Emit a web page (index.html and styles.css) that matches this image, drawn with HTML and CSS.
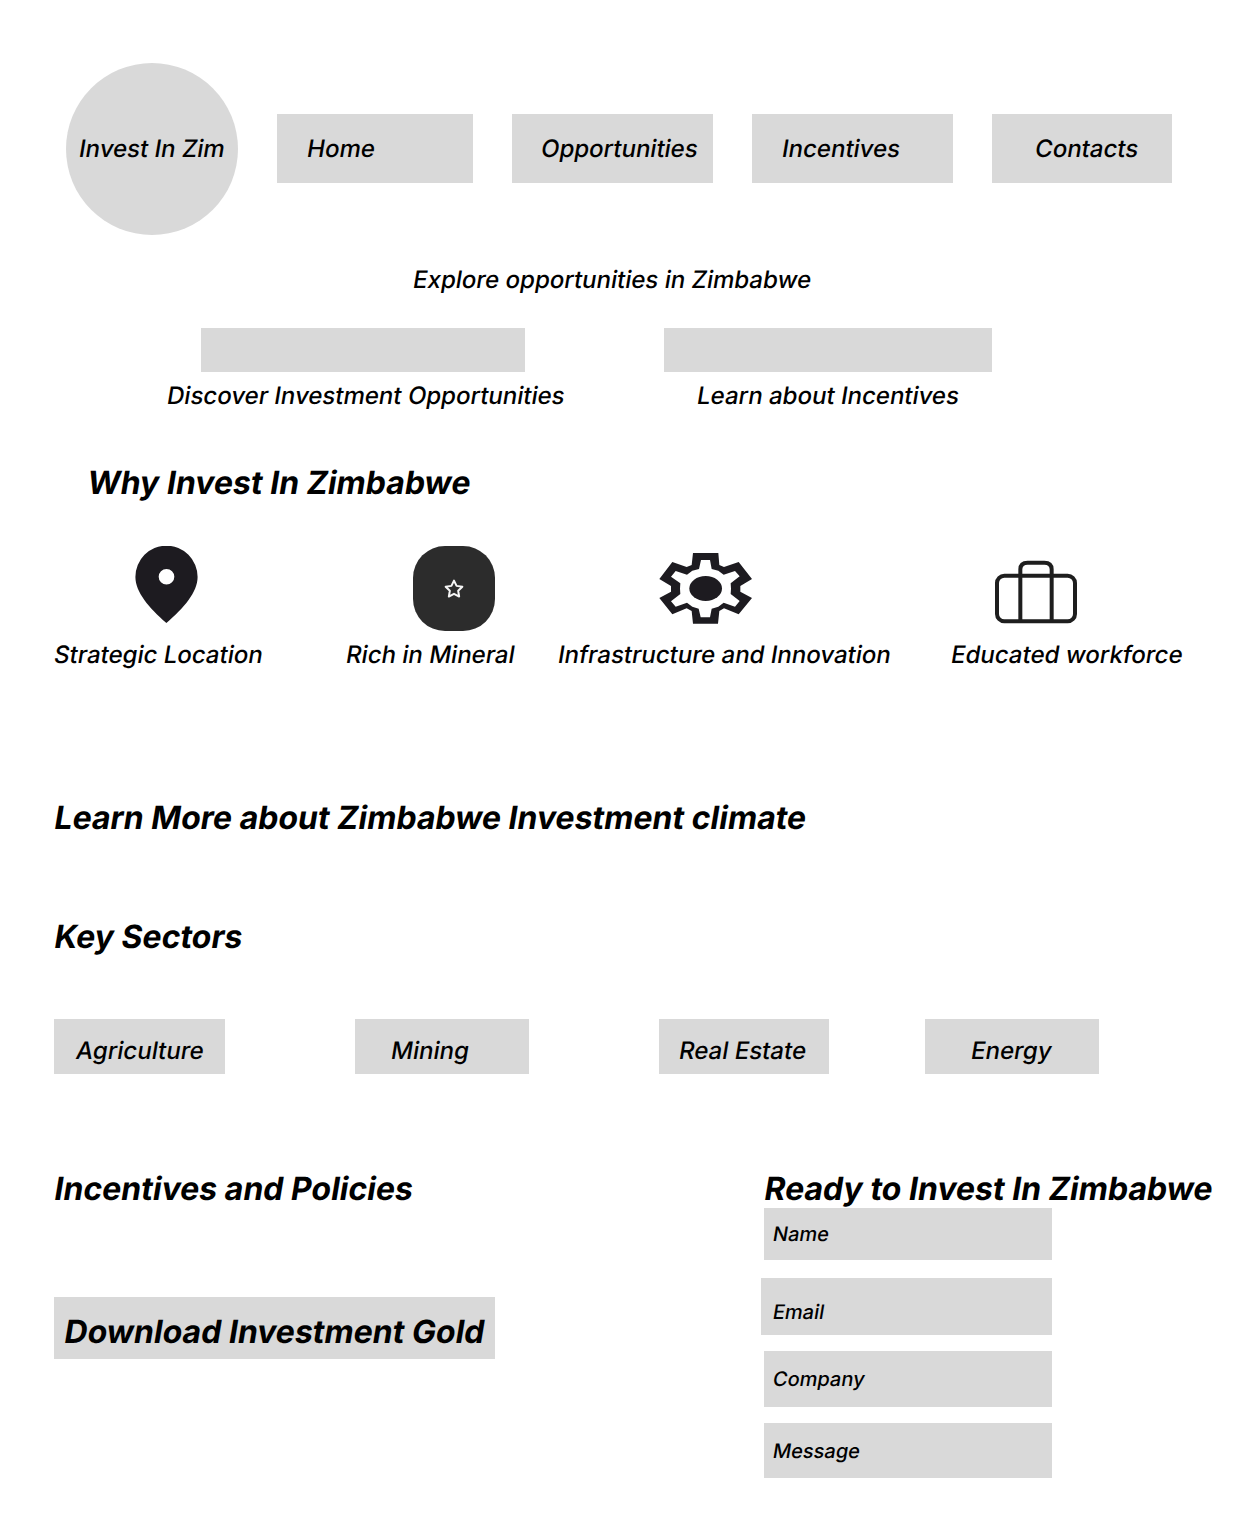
FILE: index.html
```html
<!DOCTYPE html>
<html lang="en">
<head>
<meta charset="utf-8">
<title>Invest In Zim</title>
<link rel="stylesheet" href="styles.css">
</head>
<body>
<header class="header">
  <a class="logo"><span class="slant">Invest In Zim</span></a>
  <nav class="nav">
    <a class="nav-item nav-home"><span class="slant">Home</span></a>
    <a class="nav-item nav-opportunities"><span class="slant">Opportunities</span></a>
    <a class="nav-item nav-incentives"><span class="slant">Incentives</span></a>
    <a class="nav-item nav-contacts"><span class="slant">Contacts</span></a>
  </nav>
</header>
<main>
  <section class="hero">
    <p class="tagline"><span class="slant">Explore opportunities in Zimbabwe</span></p>
    <div class="actions">
      <div class="action action-discover"><span class="bar"></span><span class="caption"><span class="slant">Discover Investment Opportunities</span></span></div>
      <div class="action action-learn"><span class="bar"></span><span class="caption"><span class="slant">Learn about Incentives</span></span></div>
    </div>
  </section>
  <section class="why">
    <h2 class="why-title"><span class="slant">Why Invest In Zimbabwe</span></h2>
    <div class="features">
      <div class="feature feature-location">
        <svg class="icon" width="64" height="85" viewBox="134 546 64 85"><path fill="#1d1b20" fill-rule="evenodd" d="M166.4 545.7A31 31.3 0 0 1 197.6 577C197.600 592 184 608 166.400 623C149 608 135.400 592 135.400 577A31 31.300 0 0 1 166.400 545.700ZM166.500 569a7.800 7.800 0 1 0 0 15.600a7.800 7.800 0 1 0 0-15.600Z"/></svg>
        <span class="caption"><span class="slant">Strategic Location</span></span>
      </div>
      <div class="feature feature-mineral">
        <span class="icon star-tile"><svg width="20" height="20" viewBox="0 0 24 24"><path fill="none" stroke="#f5f5f5" stroke-width="2.4" stroke-linejoin="round" d="M12 2l3.090 6.260L22 9.270l-5 4.870 1.180 6.880L12 17.770l-6.180 3.250L7 14.140 2 9.270l6.910-1.010z"/></svg></span>
        <span class="caption"><span class="slant">Rich in Mineral</span></span>
      </div>
      <div class="feature feature-infrastructure">
        <svg class="icon" width="94" height="85" viewBox="42 18 282 255"><path fill="#1d1b20" fill-rule="evenodd" d="M144 39H220L223 75L237 81L281 66L321 117L286 138V155L321 174L281 223L237 205L223 213L219 251H144L140 213L125 205L82 223L43 174L78 155V138L43 117L82 66L125 81L140 75ZM168 60L162 87L142 92L126 104L92 93L78 110L106 130L105 146L106 162L78 184L92 200L126 188L142 200L161 206L167 232H195L200 206L220 200L236 188L270 200L284 183L257 162L258 146L257 130L284 109L270 93L236 104L220 92L200 87L195 60Z"/><ellipse cx="182" cy="145.500" rx="49" ry="37.500" fill="#1d1b20"/></svg>
        <span class="caption"><span class="slant">Infrastructure and Innovation</span></span>
      </div>
      <div class="feature feature-workforce">
        <svg class="icon" width="84" height="85" viewBox="42 3 252 255"><g fill="none" stroke="#1e1e1e" stroke-width="12"><rect x="51" y="92" width="234" height="137" rx="22"/><path d="M121 229V73Q121 53 143 53H193Q215 53 215 73V229"/></g></svg>
        <span class="caption"><span class="slant">Educated workforce</span></span>
      </div>
    </div>
  </section>
  <h2 class="climate-title"><span class="slant">Learn More about Zimbabwe Investment climate</span></h2>
  <section class="sectors">
    <h2><span class="slant">Key Sectors</span></h2>
    <div class="sector-list">
      <span class="sector sector-agriculture"><span class="slant">Agriculture</span></span>
      <span class="sector sector-mining"><span class="slant">Mining</span></span>
      <span class="sector sector-estate"><span class="slant">Real Estate</span></span>
      <span class="sector sector-energy"><span class="slant">Energy</span></span>
    </div>
  </section>
  <div class="bottom">
    <section class="policies">
      <h2><span class="slant">Incentives and Policies</span></h2>
      <a class="download"><span class="slant">Download Investment Gold</span></a>
    </section>
    <section class="contact">
      <h2><span class="slant">Ready to Invest In Zimbabwe</span></h2>
      <form class="form">
        <label class="field field-name"><span class="slant">Name</span></label>
        <label class="field field-email"><span class="slant">Email</span></label>
        <label class="field field-company"><span class="slant">Company</span></label>
        <label class="field field-message"><span class="slant">Message</span></label>
      </form>
    </section>
  </div>
</main>
</body>
</html>
```
FILE: styles.css
```css
* { box-sizing: border-box; }
body {
  margin: 0;
  width: 1242px;
  height: 1538px;
  overflow: hidden;
  background: #fff;
  color: #000;
  font: 500 24px/29px Inter, "Liberation Sans", sans-serif;
  text-rendering: geometricPrecision;
  white-space: nowrap;
}
h2, p { margin: 0; }
h2, .download { font-size: 32px; line-height: 39px; font-weight: 700; }
svg { display: block; }

/* Oblique text that keeps the upright letter shapes, slanted from the baseline */
.slant {
  display: block;
  width: max-content;
  transform: skewX(-9.4deg);
  transform-origin: 0 80%;
}
h2 .slant { margin-left: -1.3px; }

.header { display: flex; padding: 63px 0 0 66px; }
.logo {
  width: 172px;
  height: 172px;
  padding: 71px 0 0 12px;
  border-radius: 50%;
  background: #d9d9d9;
}
.nav { display: flex; gap: 39px; margin: 51px 0 0 39px; }
.nav-item { height: 69px; padding: 20px 0 0 29px; background: #d9d9d9; }
.nav-home { width: 196px; }
.nav-opportunities, .nav-incentives { width: 201px; }
.nav-opportunities { padding-left: 28px; }
.nav-contacts { width: 180px; padding-left: 42px; }

.tagline { padding: 30px 0 0 412px; }
.actions { display: flex; margin-top: 34px; }
.action { display: flex; flex-direction: column; }
.action-discover { margin-left: 166px; width: 463px; }
.action-learn { margin-left: 35px; }
.bar { height: 44px; margin-bottom: 9px; background: #d9d9d9; }
.action-discover .bar { width: 324px; margin-left: 35px; }
.action-learn .bar { width: 328px; }
.action-learn .caption { padding-left: 32px; }

.why { padding-top: 53px; }
.why-title { padding-left: 87px; }
.features { display: flex; margin-top: 44px; padding-left: 53px; }
.feature { display: flex; flex-direction: column; gap: 9px; }
.feature-location { width: 292px; }
.feature-location .icon { margin-left: 81px; }
.feature-mineral { width: 212px; }
.feature-mineral .icon { margin-left: 68px; }
.feature-infrastructure { width: 393px; }
.feature-infrastructure .icon { margin-left: 102px; }
.feature-workforce .icon { margin-left: 44px; }
.star-tile {
  display: flex;
  align-items: center;
  justify-content: center;
  width: 82px;
  height: 85px;
  border-radius: 32px;
  background: #2c2c2c;
}

.climate-title { padding: 129px 0 0 54px; }
.sectors { padding: 80px 0 0 54px; }
.sector-list { display: flex; margin-top: 63px; }
.sector { height: 55px; padding-top: 17px; background: #d9d9d9; }
.sector-agriculture { width: 171px; padding-left: 21px; }
.sector-mining { width: 174px; margin-left: 130px; padding-left: 35px; }
.sector-estate { width: 170px; margin-left: 130px; padding-left: 19px; }
.sector-energy { width: 174px; margin-left: 96px; padding-left: 45px; }

.bottom { display: flex; padding: 95px 0 0 54px; }
.policies { width: 710px; }
.download {
  display: block;
  width: 441px;
  height: 62px;
  margin-top: 89px;
  padding: 15px 0 0 8.5px;
  background: #d9d9d9;
}
.form { display: flex; flex-direction: column; }
.field {
  width: 288px;
  padding-left: 8px;
  background: #d9d9d9;
  font-size: 20px;
  line-height: 24px;
}
.field-name { height: 52px; padding-top: 14px; }
.field-email { width: 291px; height: 57px; margin: 18px 0 0 -3px; padding: 22px 0 0 11px; }
.field-company { height: 56px; margin-top: 16px; padding-top: 16px; }
.field-message { height: 55px; margin-top: 16px; padding-top: 16px; }
```
